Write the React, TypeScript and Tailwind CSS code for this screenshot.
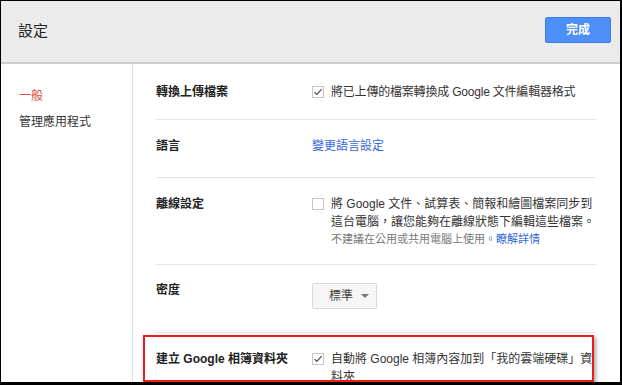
import React from "react";

const FONT = '"Liberation Sans", "Noto Sans CJK TC", sans-serif';

function Check({ checked }: { checked: boolean }) {
  return (
    <span className="mt-[3px] flex h-[12px] w-[12px] shrink-0 items-center justify-center border border-[#c6c6c6] bg-white">
      {checked && (
        <svg width="12" height="12" viewBox="0 0 12 12" className="-mt-[1px]">
          <polyline points="1.8,6.2 4.6,9 10.4,2.6" fill="none" stroke="#4a4a4a" strokeWidth="1.4" />
        </svg>
      )}
    </span>
  );
}

function Row({
  label,
  children,
  className,
  last,
}: {
  label: string;
  children: React.ReactNode;
  className: string;
  last?: boolean;
}) {
  return (
    <div className={`flex ${last ? "" : "border-b border-[#e5e5e5]"} ${className}`}>
      <div className="w-[156px] shrink-0 text-[12px] font-bold leading-[18px] text-[#222]">{label}</div>
      <div className="flex-1">{children}</div>
    </div>
  );
}

export default function App() {
  return (
    <div
      className="relative h-[385px] w-[622px] overflow-hidden border-t border-l border-r-2 border-b-[3px] border-black bg-white"
      style={{ fontFamily: FONT }}
    >
      {/* header */}
      <div className="flex h-[63px] items-center justify-between border-b-2 border-[#cdcdcd] bg-[#ebebeb] pl-[17px] pr-[9px]">
        <div className="-mt-[1px] text-[15px] leading-[20px] text-[#222]">設定</div>
        <button className="-mt-[4px] h-[26px] w-[66px] rounded-[2px] border border-[#3b7de9] bg-[#4d8ef8] text-[12px] font-bold text-white">
          完成
        </button>
      </div>

      {/* body */}
      <div className="flex h-[321px]">
        <div className="w-[132px] shrink-0 border-r border-[#e0e0e0] pl-[18px] pt-[23px] text-[12px] leading-[18px]">
          <div className="text-[#dd4b39]">一般</div>
          <div className="mt-[8px] text-[#333]">管理應用程式</div>
        </div>

        <div className="flex-1 pl-[23px] pr-[24px]">
          <Row label="轉換上傳檔案" className="pt-[19px] pb-[18px]">
            <div className="flex gap-[7px] text-[12px] leading-[18px] text-[#333]">
              <Check checked />
              <span className="whitespace-nowrap tracking-[-0.2px]">將已上傳的檔案轉換成 Google 文件編輯器格式</span>
            </div>
          </Row>

          <Row label="語言" className="pt-[17px] pb-[22px]">
            <div className="text-[12px] leading-[18px] text-[#3367d6]">變更語言設定</div>
          </Row>

          <Row label="離線設定" className="pt-[17px] pb-[17px]">
            <div className="flex gap-[7px] text-[12px] leading-[18px] text-[#333]">
              <Check checked={false} />
              <div>
                <div className="whitespace-nowrap">將 Google 文件、試算表、簡報和繪圖檔案同步到</div>
                <div className="whitespace-nowrap">這台電腦，讓您能夠在離線狀態下編輯這些檔案。</div>
                <div className="whitespace-nowrap text-[11px] leading-[16px] text-[#777]">
                  不建議在公用或共用電腦上使用。<span className="text-[#3367d6]">瞭解詳情</span>
                </div>
              </div>
            </div>
          </Row>

          <Row label="密度" className="pt-[16px] pb-[23px]">
            <div className="mt-[2px] flex h-[26px] w-[65px] items-center justify-between rounded-[2px] border border-[#d9d9d9] bg-[#f6f6f6] pl-[16px] pr-[7px] text-[12px] text-[#444]">
              <span>標準</span>
              <svg width="8" height="4" viewBox="0 0 8 4">
                <polygon points="0,0 8,0 4,4" fill="#777" />
              </svg>
            </div>
          </Row>

          <Row label="建立 Google 相簿資料夾" className="pt-[17px]" last>
            <div className="flex gap-[7px] text-[12px] leading-[18px] text-[#333]">
              <Check checked />
              <div>
                <div className="whitespace-nowrap">自動將 Google 相簿內容加到「我的雲端硬碟」資</div>
                <div className="whitespace-nowrap">料夾</div>
              </div>
            </div>
          </Row>
        </div>
      </div>

      {/* red highlight box */}
      <div className="absolute left-[142px] top-[334px] h-[47px] w-[451px] border-2 border-[#ee1c1c] shadow-[2px_2px_4px_rgba(0,0,0,0.35)]" />
    </div>
  );
}
